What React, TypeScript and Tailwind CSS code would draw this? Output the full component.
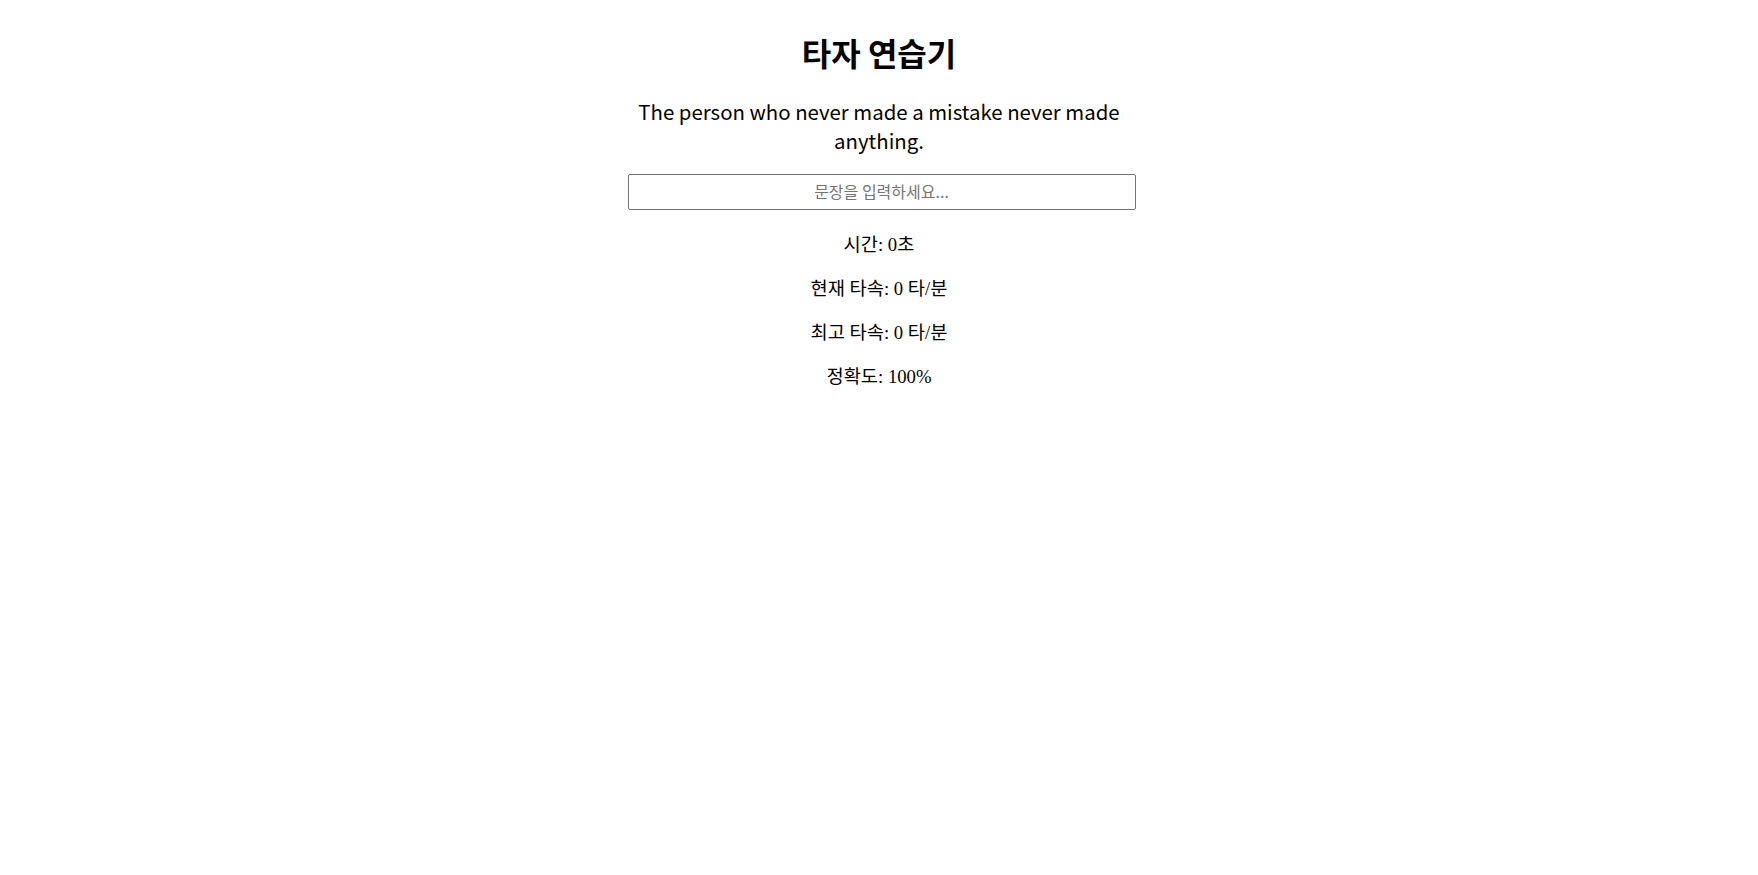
import { useState } from 'react'

const sans = 'font-["Noto_Sans_CJK_KR","Noto_Sans",sans-serif]'

export default function App() {
  const [text, setText] = useState('')
  const sentence = 'The person who never made a mistake never made anything.'

  return (
    <div className="min-h-screen bg-white text-black">
      <div className="flex flex-col items-center pt-[29px] text-center">
        <h1 className={`${sans} text-[32px] font-bold leading-[46px]`}>타자 연습기</h1>
        <p className={`${sans} mt-[22px] w-[508px] text-[20.4px] leading-[29px]`}>{sentence}</p>
        <input
          className={`${sans} ml-[5px] mt-[19px] h-[36px] w-[508px] rounded-[2px] border border-[#767676] px-2 pb-[2px] text-center text-[16px] outline-none placeholder:text-[#757575]`}
          value={text}
          onChange={(e) => setText(e.target.value)}
          placeholder="문장을 입력하세요..."
        />
        <div className='mt-[22px] flex flex-col gap-[18px] font-["Liberation_Serif","Noto_Sans_CJK_KR",serif] text-[18.7px] leading-[26px]'>
          <p>시간: 0초</p>
          <p>현재 타속: 0 타/분</p>
          <p>최고 타속: 0 타/분</p>
          <p>정확도: 100%</p>
        </div>
      </div>
    </div>
  )
}
